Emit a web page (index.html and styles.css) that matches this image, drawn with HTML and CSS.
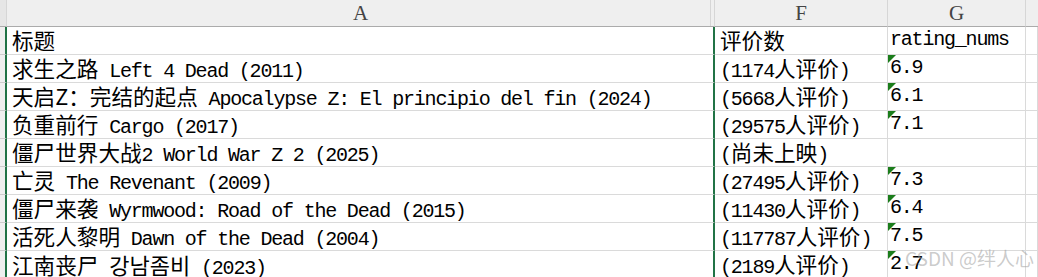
FILE: index.html
```html
<!DOCTYPE html>
<html lang="zh">
<head>
<meta charset="utf-8">
<title>Sheet</title>
<link rel="stylesheet" href="styles.css">
</head>
<body>
<div class="sheet">
  <div class="hdr corner"></div>
  <div class="hdr col-a">A</div>
  <div class="hdr">F</div>
  <div class="hdr">G</div>
  <div class="hdr last"></div>

  <div class="rh"></div>
  <div class="c a"><span class="zh">标题</span></div>
  <div class="c"><span class="zh">评价数</span></div>
  <div class="c g">rating_nums</div>
  <div class="c"></div>

  <div class="rh"></div>
  <div class="c a"><span class="zh">求生之路</span> Left 4 Dead (2011)</div>
  <div class="c">(1174<span class="zh">人评价</span>)</div>
  <div class="c g mark">6.9</div>
  <div class="c"></div>

  <div class="rh"></div>
  <div class="c a"><span class="zh">天启Z：完结的起点</span> Apocalypse Z: El principio del fin (2024)</div>
  <div class="c">(5668<span class="zh">人评价</span>)</div>
  <div class="c g mark">6.1</div>
  <div class="c"></div>

  <div class="rh"></div>
  <div class="c a"><span class="zh">负重前行</span> Cargo (2017)</div>
  <div class="c">(29575<span class="zh">人评价</span>)</div>
  <div class="c g mark">7.1</div>
  <div class="c"></div>

  <div class="rh"></div>
  <div class="c a"><span class="zh">僵尸世界大战</span>2 World War Z 2 (2025)</div>
  <div class="c">(<span class="zh">尚未上映</span>)</div>
  <div class="c g"></div>
  <div class="c"></div>

  <div class="rh"></div>
  <div class="c a"><span class="zh">亡灵</span> The Revenant (2009)</div>
  <div class="c">(27495<span class="zh">人评价</span>)</div>
  <div class="c g mark">7.3</div>
  <div class="c"></div>

  <div class="rh"></div>
  <div class="c a"><span class="zh">僵尸来袭</span> Wyrmwood: Road of the Dead (2015)</div>
  <div class="c">(11430<span class="zh">人评价</span>)</div>
  <div class="c g mark">6.4</div>
  <div class="c"></div>

  <div class="rh"></div>
  <div class="c a"><span class="zh">活死人黎明</span> Dawn of the Dead (2004)</div>
  <div class="c">(117787<span class="zh">人评价</span>)</div>
  <div class="c g mark">7.5</div>
  <div class="c"></div>

  <div class="rh"></div>
  <div class="c a"><span class="zh">江南丧尸</span> <span class="ko">강남좀비</span> (2023)</div>
  <div class="c">(2189<span class="zh">人评价</span>)</div>
  <div class="c g mark">2.7</div>
  <div class="c"></div>

  <div class="watermark">CSDN @绊人心</div>
</div>
</body>
</html>
```
FILE: styles.css
```css
* { box-sizing: border-box; }
html, body { margin: 0; padding: 0; background: #fff; overflow: hidden; }

.sheet {
  position: relative;
  width: 1038px;
  height: 277px;
  overflow: hidden;
  display: grid;
  grid-template-columns: 7px 708px 173px 138px 1fr;
  grid-template-rows: 27px;
  grid-auto-rows: 28px;
  font-family: "Liberation Mono", "Noto Sans CJK SC", monospace;
  font-size: 20px;
  letter-spacing: -1.2px;
  color: #000;
}

.hdr {
  background: #efefef;
  border-bottom: 1px solid #ababab;
  border-right: 1px solid #d6d6d6;
  font-family: "Liberation Serif", serif;
  font-size: 21px;
  letter-spacing: 0;
  color: #444;
  display: flex;
  justify-content: center;
  align-items: center;
  padding-top: 1px;
}
.hdr.corner { background: #e6e6e6; }
.hdr.col-a { box-shadow: inset -3px 0 0 #efefef, inset -4px 0 0 #d6d6d6; }
.hdr.last { border-right: none; }

.rh {
  background: #efefef;
  border-right: 2px solid #217346;
  border-bottom: 1px solid #cdcdcd;
}

.c {
  display: block;
  border-bottom: 1px solid #dadada;
  border-right: 1px solid #dadada;
  padding: 2px 0 0 5px;
  white-space: nowrap;
  line-height: 22px;
}
.c.a { border-right: 2px solid #217346; }
.c.g { padding-left: 2px; }

.zh {
  font-family: "Noto Sans CJK SC", sans-serif;
  font-size: 21.6px;
  letter-spacing: 0;
}
.ko {
  font-family: "Noto Sans CJK KR", sans-serif;
  font-size: 22px;
  letter-spacing: 0;
}

.mark { position: relative; }
.mark::before {
  content: "";
  position: absolute;
  left: 0;
  top: 0;
  width: 0;
  height: 0;
  border-top: 8px solid #1b7d1b;
  border-right: 8px solid transparent;
}

.watermark {
  position: absolute;
  right: 4px;
  bottom: 6px;
  font-family: "Noto Sans CJK SC", "Noto Sans", sans-serif;
  font-size: 19px;
  letter-spacing: 0;
  color: rgba(160, 160, 160, 0.55);
  white-space: nowrap;
}
```
